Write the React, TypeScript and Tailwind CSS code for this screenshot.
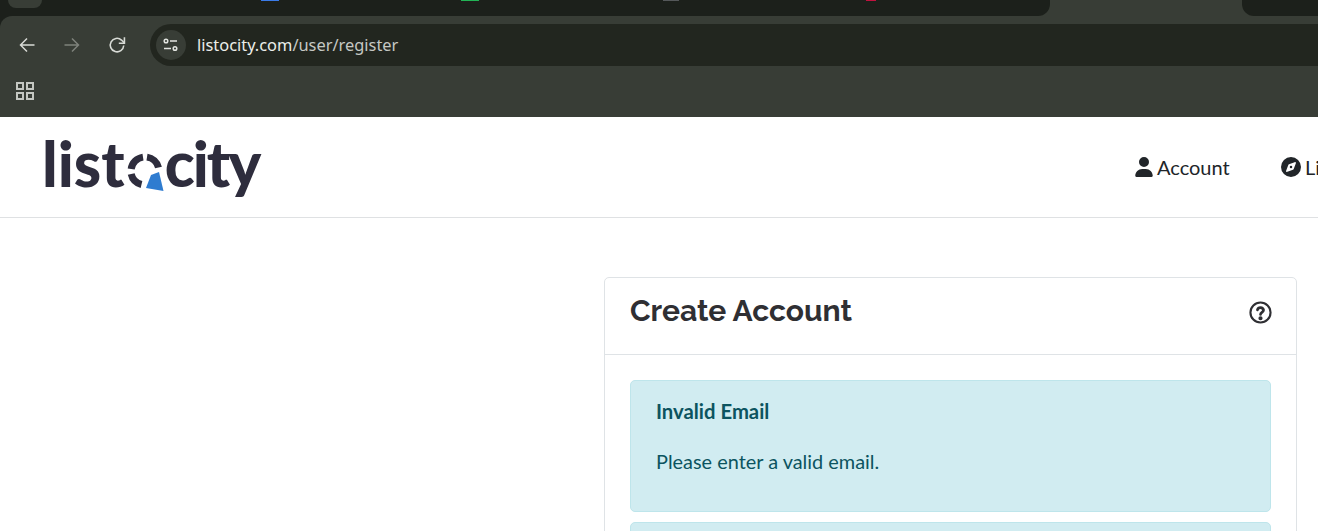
import React from "react";

const Back = ({ c = "#d8dbd6" }: { c?: string }) => (
  <svg width="16" height="16" viewBox="0 0 16 16" fill="none" stroke={c} strokeWidth="1.5">
    <path d="M15.500 8H1.500M8 1.500 1.500 8 8 14.500" />
  </svg>
);

const Forward = ({ c = "#7e827b" }: { c?: string }) => (
  <svg width="16" height="16" viewBox="0 0 16 16" fill="none" stroke={c} strokeWidth="1.5">
    <path d="M.500 8H14.500M8 1.500 14.500 8 8 14.500" />
  </svg>
);

const Logo = () => (
  <div className="flex items-start h-[80px] font-['Lato',sans-serif] font-black text-[#2e2d3d] text-[62px] leading-[80px]">
    <span>list</span>
    <svg width="40" height="42" viewBox="0 0 40 42" className="mt-[28px] ml-[2px] mr-[-2px] shrink-0">
      <g fill="none" stroke="#2e2d3d" strokeWidth="7">
        <path d="M4.200 18A14 14 0 0 1 16 6.100" />
        <path d="M20 6.100A14 14 0 0 1 31.500 16.500" />
        <path d="M4.200 23A14 14 0 0 0 14.500 33.500" />
      </g>
      <path d="M24 24 32 21 36.500 40 19 37Z" fill="#2f7cd0" />
    </svg>
    <span className="tracking-[-2px]">city</span>
  </div>
);

export default function App() {
  return (
    <div className="h-[531px] overflow-hidden bg-white font-['Lato',sans-serif]">
      <div className="bg-[#1c201b]">
        <div className="relative h-[16px]">
          <div className="absolute left-[8px] top-0 w-[34px] h-[8px] bg-[#383d36] rounded-b-[8px]" />
          <div className="absolute left-[261px] top-0 w-[18px] h-[1px] bg-[#3b7be8]" />
          <div className="absolute left-[461px] top-0 w-[18px] h-[1px] bg-[#22b455]" />
          <div className="absolute left-[663px] top-0 w-[16px] h-[1px] bg-[#55585a]" />
          <div className="absolute left-[866px] top-0 w-[10px] h-[1px] bg-[#c2123f]" />
          <div className="absolute left-[1038px] right-[64px] top-0 h-[16px] bg-[#383d36]" />
          <div className="absolute left-[1038px] top-0 w-[12px] h-[16px] bg-[#1c201b] rounded-br-[12px]" />
          <div className="absolute right-[64px] top-0 w-[12px] h-[16px] bg-[#1c201b] rounded-bl-[12px]" />
        </div>
        <div className="bg-[#383d36] rounded-tl-[12px]">
          <div className="h-[50px] pt-[8px] flex items-start">
            <div className="flex items-center h-[42px] pl-[19px] gap-[29px] w-[150px]">
              <Back />
              <Forward />
              <svg width="18" height="18" viewBox="0 0 16 16" fill="none" stroke="#d8dbd6" strokeWidth="1.400" className="ml-[-1px]">
                <path d="M14 8.500A6 6 0 1 1 12 3.600L14.400 6" />
                <path d="M14.600 1.200V6.400H9.600" />
              </svg>
            </div>
            <div className="flex-1 h-[42px] bg-[#22261f] rounded-l-[21px] flex items-center pl-[6px]">
              <div className="w-[30px] h-[30px] rounded-full bg-[#383d36] flex items-center justify-center">
                <svg width="16" height="14" viewBox="0 0 16 14" fill="none" stroke="#e3e5e1" strokeWidth="1.500">
                  <circle cx="3" cy="3" r="1.800" />
                  <path d="M7 3h7M1 10.500h7" />
                  <circle cx="12" cy="10.500" r="1.800" />
                </svg>
              </div>
              <span className="ml-[11px] text-[16.400px] font-['Noto_Sans',sans-serif] text-[#c6c9c4] mt-[1px]">
                <span className="text-[#eceeea]">listocity.com</span>/user/register
              </span>
            </div>
          </div>
          <div className="h-[51px] flex items-center pl-[16px] pb-[1px]">
            <svg width="18" height="18" viewBox="0 0 18 18" fill="none" stroke="#c4c7c2" strokeWidth="2">
              <rect x="1" y="1" width="6" height="6" />
              <rect x="11" y="1" width="6" height="6" />
              <rect x="1" y="11" width="6" height="6" />
              <rect x="11" y="11" width="6" height="6" />
            </svg>
          </div>
        </div>
      </div>
      <header className="h-[101px] border-b border-[#dfe1e3] flex items-center overflow-hidden">
        <div className="ml-[42px] flex-1 mt-[-8px]">
          <Logo />
        </div>
        <div className="flex items-center text-[20px] text-[#212529] w-[183px] shrink-0 whitespace-nowrap">
          <svg width="18" height="20" viewBox="0 0 448 512" fill="#212529" className="mr-[4px] shrink-0">
            <path d="M224 256a128 128 0 1 0 0-256 128 128 0 1 0 0 256zm-45.700 48C79.800 304 0 383.800 0 482.300 0 498.700 13.300 512 29.700 512h388.600c16.400 0 29.700-13.300 29.700-29.700C448 383.800 368.200 304 269.700 304h-91.400z" />
          </svg>
          <span className="w-[124px] shrink-0">Account</span>
          <svg width="20" height="20" viewBox="0 0 512 512" fill="#212529" className="mr-[4px] shrink-0">
            <path d="M256 512a256 256 0 1 0 0-512 256 256 0 1 0 0 512zm50.700-186.900L162.400 380.600c-19.400 7.500-38.500-11.600-31-31l55.500-144.300c3.300-8.500 9.900-15.100 18.400-18.400l144.300-55.500c19.400-7.500 38.500 11.600 31 31L325.100 306.700c-3.200 8.500-9.900 15.100-18.400 18.400zM288 256a32 32 0 1 0-64 0 32 32 0 1 0 64 0z" />
          </svg>
          <span className="shrink-0">Li</span>
        </div>
      </header>
      <main className="pt-[59px] pr-[21px] flex justify-end">
        <div className="w-[693px] border border-[#dfe3e6] rounded-[5px] bg-white">
          <div className="h-[77px] border-b border-[#dfe3e6] pl-[25px] pr-[24px] flex items-center justify-between">
            <h1 className="text-[30px] font-bold text-[#2f2f33] font-['Raleway','Open_Sans',sans-serif] mt-[-11px]">Create Account</h1>
            <svg width="23" height="23" viewBox="0 0 24 24" fill="none" stroke="#2f2f33" strokeWidth="2.200" strokeLinecap="round" className="mt-[-7px]">
              <circle cx="12" cy="12" r="10.500" />
              <path d="M8.800 9.300A3.300 3.300 0 0 1 15.200 9.500C15.200 11.700 12 12 12 14" strokeWidth="2.800" />
              <circle cx="12" cy="18" r="1.100" fill="#2f2f33" />
            </svg>
          </div>
          <div className="pt-[25px] px-[25px]">
            <div className="h-[132px] mb-[10px] bg-[#d1ecf1] border border-[#bee5eb] rounded-[5px] px-[25px] pt-[16px] text-[#0c5460]">
              <h2 className="font-bold leading-[28px] text-[20.300px]">Invalid Email</h2>
              <p className="mt-[22px] leading-[28px] text-[19.900px]">Please enter a valid email.</p>
            </div>
            <div className="h-[132px] bg-[#d1ecf1] border border-[#bee5eb] rounded-[5px]" />
          </div>
        </div>
      </main>
    </div>
  );
}
